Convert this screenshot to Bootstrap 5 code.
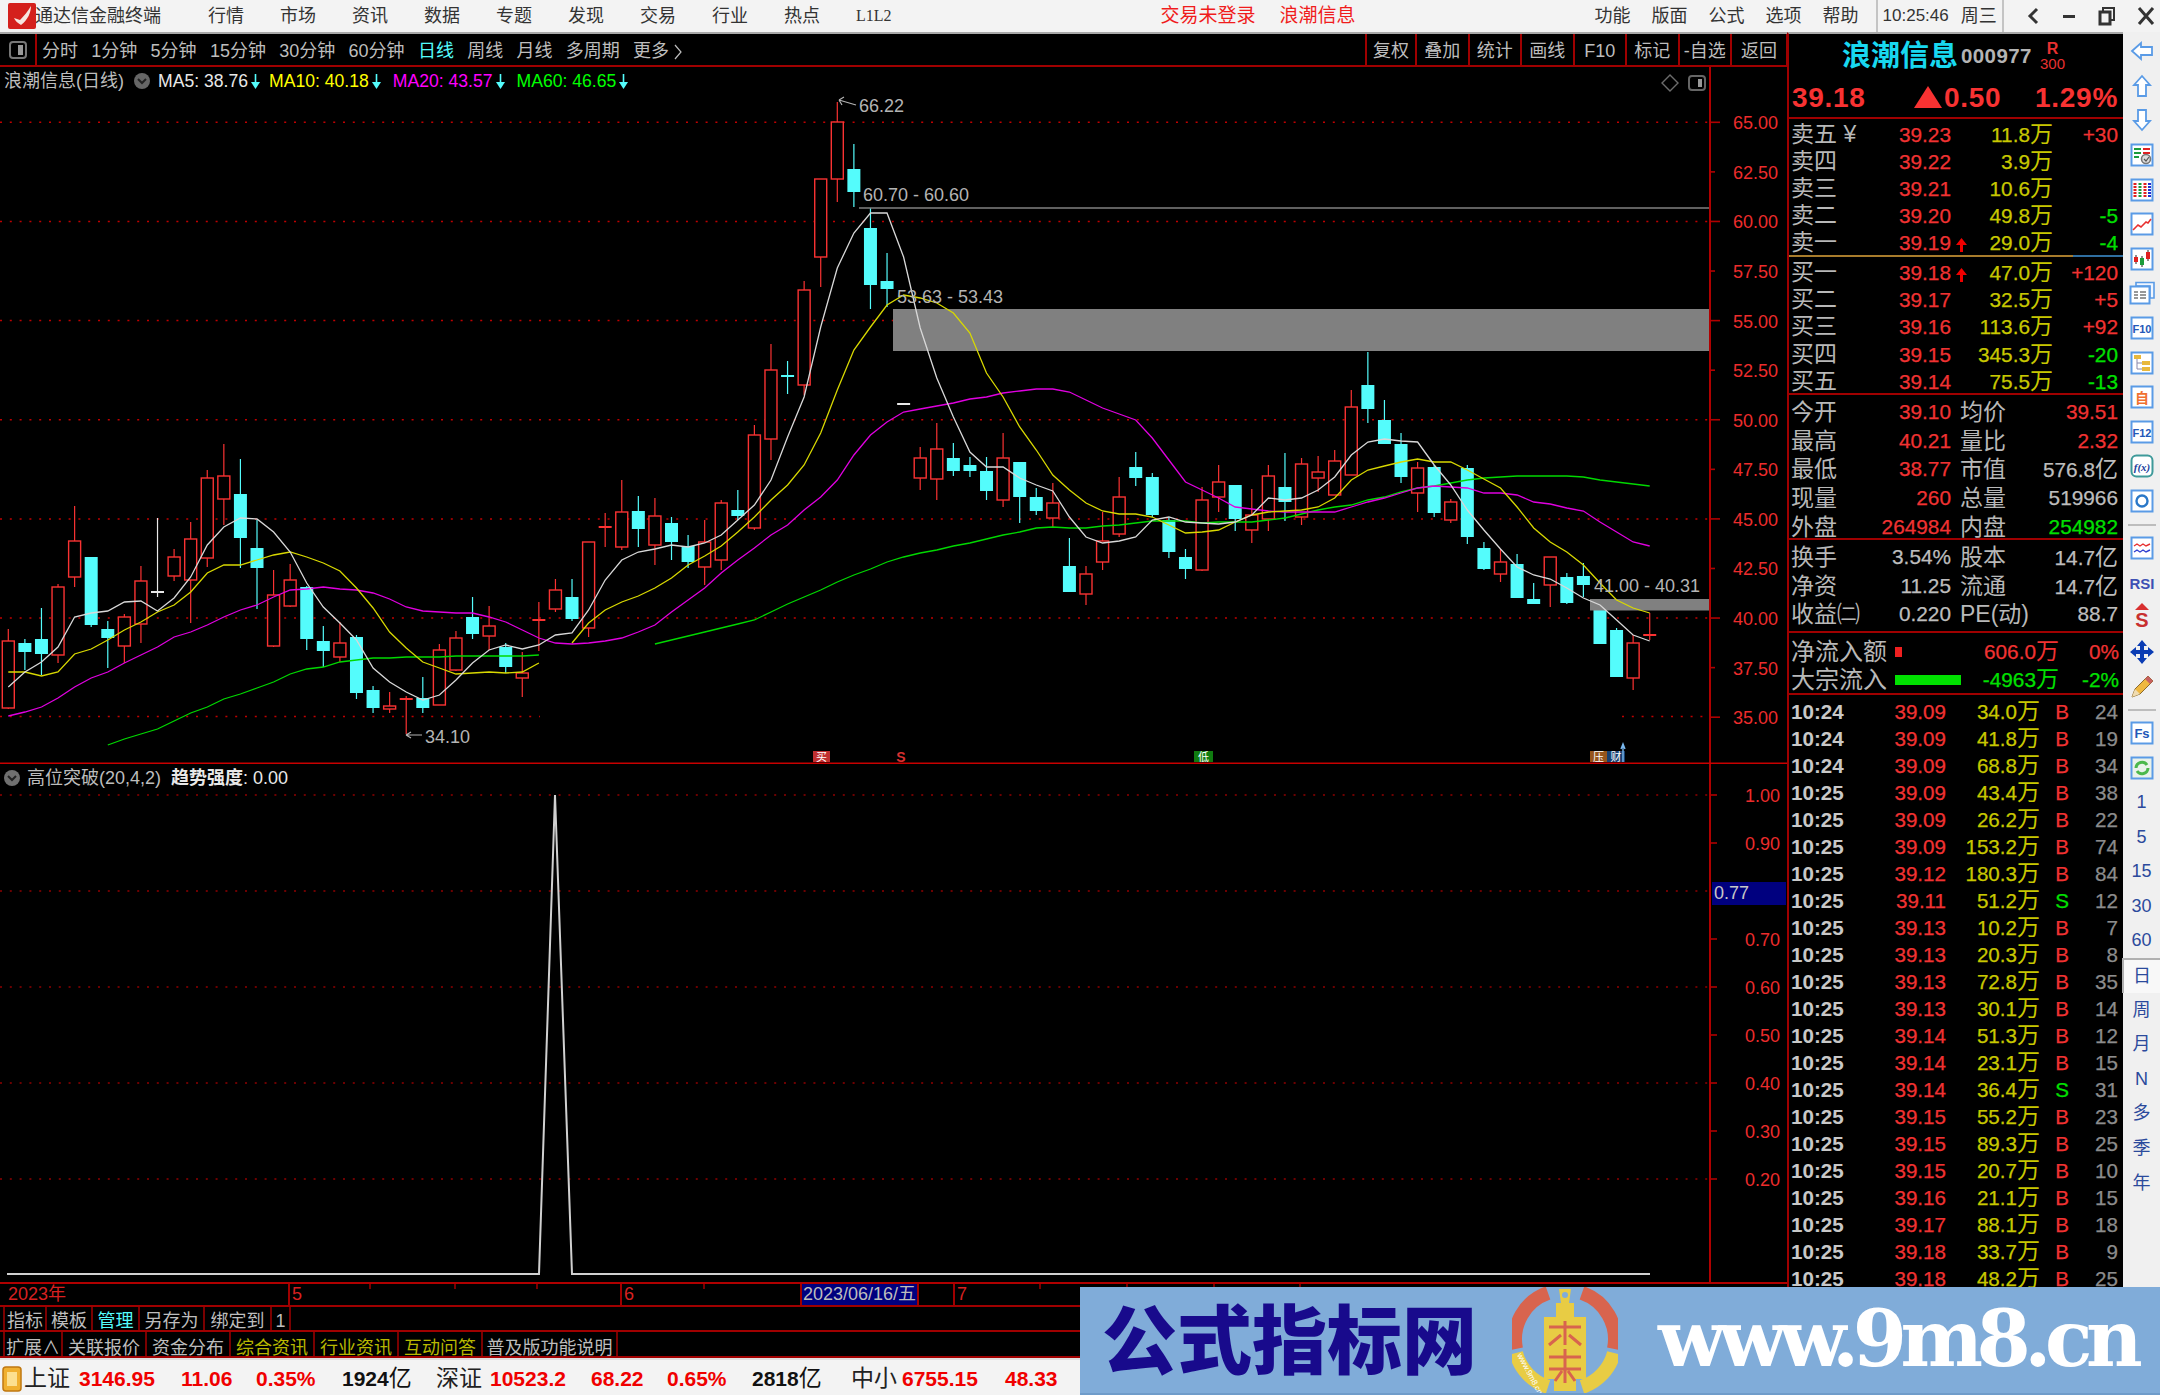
<!DOCTYPE html>
<html lang="zh-CN">
<head>
    <meta charset="UTF-8">
    <meta name="viewport" content="width=device-width, initial-scale=1.0">
    <title>通达信金融终端</title>
    <link href="https://cdn.jsdelivr.net/npm/bootstrap@5.3.0/dist/css/bootstrap.min.css" rel="stylesheet">
    <style>
        html, body { margin: 0; background: #000; }
        body { font-family: "Liberation Sans", "Noto Sans CJK SC", sans-serif; color: #bdbdbd; }
        .shell { width: 2160px; height: 1395px; overflow: hidden; background: #000; }

        /* title bar */
        .title-bar { height: 34px; background: #f3f3f3; border-bottom: 2px solid #a8a8a8; color: #333; font-size: 18px; line-height: 34px; white-space: nowrap; flex: none; }
        .app-logo { margin-left: 8px; width: 28px; height: 26px; flex: none; }
        .app-name { width: 126px; margin-left: -1px; }
        .menu-main { margin-left: 47px; gap: 36px; }
        .menu-tail { font-family: "Liberation Serif", serif; font-size: 16px; margin-left: 0; }
        .alert-text { margin-left: 269px; color: #f01c1c; font-size: 19px; gap: 24px; }
        .menu-side { margin-left: 239px; gap: 21px; }
        .clock { margin-left: 17px; border-left: 2px solid #c4c4c4; border-right: 2px solid #c4c4c4; padding: 0 5px; gap: 9px; font-size: 17px; }
        .clock span:last-child { font-size: 18px; margin-left: 3px; }
        .win-btns { margin-left: 22px; gap: 21px; }

        /* left side */
        .work-row { height: 1325px; }
        .left-col { width: 1787px; flex: none; }
        .tool-row { height: 33px; border-bottom: 2px solid #a00000; font-size: 18px; line-height: 35px; flex: none; white-space: nowrap; }
        .tool-first { width: 37px; border-right: 2px solid #a00000; flex: none; }
        .period-list { padding-left: 5px; gap: 13.3px; }
        .period-on { color: #54fcfc; }
        .tool-btn { border-left: 2px solid #a00000; text-align: center; }
        .tool-btns { margin-left: auto; height: 31px; border-right: 2px solid #a00000; margin-right: -1px; }
        .w52 { width: 52.5px; }
        .w50 { width: 50px; }
        .w56 { width: 56px; }

        .chart-main { height: 697px; flex: none; }
        .chart-sub { height: 518px; flex: none; }
        .chart-main svg, .chart-sub svg { display: block; }
        .legend-row { left: 4px; top: 2px; font-size: 17.6px; line-height: 24px; white-space: nowrap; }
        .legend-name { width: 129px; font-size: 18px; color: #bdbdbd; }
        .legend-ma { margin-left: 12px; }
        .ma-w { color: #e8e8e8; margin-left: 7px; }
        .ma-y { color: #ffff00; margin-left: 9px; }
        .ma-p { color: #ff00ff; }
        .ma-g { color: #00ff00; }
        .legend-arrow { width: 9px; height: 17px; margin-left: 3px; }
        .sub-legend { left: 3px; top: 2px; font-size: 18px; line-height: 24px; white-space: nowrap; gap: 6px; }
        .sub-legend b { color: #e8e8e8; font-weight: 400; margin-left: 4px; }
        .sub-legend b em { font-style: normal; font-weight: 700; }
        .corner-tools { top: 7px; right: 81px; gap: 9px; }

        .time-axis { height: 25px; border-top: 2px solid #b00000; border-bottom: 2px solid #a00000; font-size: 18px; line-height: 21px; display: grid; grid-template-columns: 288px 332px 180px 117px 36px 1fr; flex: none; }
        .time-axis > div { border-left: 2px solid #a00000; padding-left: 2px; color: #d82020; white-space: nowrap; }
        .time-axis > div:first-child { border-left: 0; padding-left: 8px; }
        .time-axis .date-cell { background: #00007f; color: #bdbdbd; padding-left: 1px; }
        .tab-row { height: 25px; border-bottom: 2px solid #a00000; padding-left: 3px; font-size: 18px; line-height: 29px; white-space: nowrap; flex: none; }
        .tab-row-low { height: 26px; line-height: 32px; }
        .tab-cell { border-left: 2px solid #7a0000; text-align: center; }
        .tab-cell:last-child { border-right: 2px solid #7a0000; }
        .tab-on { color: #54fcfc; }
        .tab-gold { color: #b8b800; }
        .t42 { width: 42px; } .t46 { width: 46px; } .t47 { width: 47px; } .t65 { width: 65px; } .t67 { width: 67px; } .t21 { width: 21px; }
        .t58 { width: 58px; } .t84 { width: 84px; } .t137 { width: 137px; }

        /* quote panel */
        .quote-panel { width: 336px; flex: none; border-left: 2px solid #a00000; border-top: 2px solid #a8a8a8; margin-top: -2px; white-space: nowrap; }
        .q-head { height: 85px; border-bottom: 2px solid #a00000; flex: none; }
        .q-title { height: 44px; padding-left: 53px; align-items: center; }
        .q-name { color: #18d8f0; font-size: 29px; font-weight: 700; line-height: 40px; width: 119px; }
        .q-code { color: #b4b4b4; font-size: 20.5px; font-weight: 700; letter-spacing: .4px; width: 79px; }
        .q-tags { color: #e83030; line-height: 15px; font-size: 15px; text-align: center; }
        .q-tags b { display: block; font-size: 16px; }
        .q-price { color: #f83232; font-size: 28px; font-weight: 700; letter-spacing: .7px; line-height: 40px; display: grid; grid-template-columns: 121px 118px 1fr; padding-left: 3px; }
        .q-price span:last-child { text-align: right; padding-right: 5px; }
        .q-tri { width: 30px; height: 24px; margin-right: 1px; vertical-align: -2px; }
        .book-row { height: 27.2px; line-height: 27px; display: grid; grid-template-columns: 90px 70px 20px 82px 65px; padding-left: 2px; font-size: 20.8px; -webkit-text-stroke: .25px; }
        .lbl { color: #b8b8b8; font-size: 23px; -webkit-text-stroke: 0; }
        .num-r { text-align: right; }
        .c-red { color: #f03232; }
        .c-yel { color: #c8c800; }
        .c-grn { color: #00e000; }
        .c-gry { color: #bdbdbd; }
        .wan { font-size: 23px; -webkit-text-stroke: 0; }
        .book-split { height: 2px; background: linear-gradient(90deg, #a87c2c 85%, #2f6ea0 85%); flex: none; }
        .book-sell { height: 136px; padding-top: 1.5px; flex: none; }
        .book-buy { flex: none; border-bottom: 2px solid #a00000; height: 138px; padding-top: 2px; }
        .stat-block { border-bottom: 2px solid #a00000; flex: none; padding-top: 3px; }
        .stat-row { line-height: 28px; display: grid; grid-template-columns: 88px 72px 79px 88px; padding-left: 2px; font-size: 20.8px; -webkit-text-stroke: .25px; }
        .stat-row .lbl2 { padding-left: 9px; }
        .h287 { height: 28.7px; }
        .h285 { height: 28.5px; }
        .stat-a { height: 145px; }
        .stat-b { height: 93px; }
        .flow-block { height: 62px; padding-top: 4px; border-bottom: 2px solid #a00000; flex: none; }
        .flow-row { height: 28px; line-height: 28px; display: grid; grid-template-columns: 104px 66px 98px 60px; padding-left: 2px; font-size: 20.8px; align-items: center; -webkit-text-stroke: .25px; }
        .flow-row .lbl { font-size: 24px; }
        .flow-bar { height: 10px; display: block; }
        .flow-bar-in { width: 7px; background: #f02020; }
        .flow-bar-out { width: 66px; background: #00e000; }
        .tick-list { padding-top: 3px; }
        .tick-row { height: 27px; line-height: 27px; display: grid; grid-template-columns: 78px 77px 94px 36px 42px; padding-left: 2px; font-size: 20.6px; -webkit-text-stroke: .25px; }
        .tick-time { color: #c8c8c8; font-weight: 700; -webkit-text-stroke: 0; }
        .tick-n { color: #8c8c8c; text-align: right; }

        /* right tool strip */
        .side-strip { width: 37px; flex: none; background: #f0f0f0; margin-top: -2px; padding-top: 2px; color: #2b4a9c; font-size: 18px; }
        .side-item { height: 34.6px; flex: none; }
        .side-gap { height: 12.4px; flex: none; }
        .side-gap i { width: 28px; height: 2px; background: #bdbdbd; display: block; }
        .side-on { background: #f8f8f8; border-left: 2px solid #b0b0b0; border-top: 2px solid #b0b0b0; margin-left: -1px; }

        /* status bar */
        .status-bar { height: 37px; background: #f3f3f3; border-top: 2px solid #e0e0e0; padding-left: 2px; display: grid; grid-template-columns: 22px 55px 102px 75px 86px 94px 54px 101px 76px 85px 99px 51px 103px 1fr; font-size: 21px; font-weight: 700; line-height: 37px; color: #f00000; white-space: nowrap; flex: none; }
        .st-name { color: #222; font-size: 23px; font-weight: 400; }
        .st-amt { color: #111; }
        .st-amt em { font-style: normal; font-weight: 400; font-size: 23px; }

        /* watermark banner */
        .wm-banner { left: 1080px; top: 1287px; width: 1080px; height: 108px; background: #80acd9; border-bottom: 2px solid #6f9cca; white-space: nowrap; overflow: hidden; }
        .wm-cn { color: #180a8c; font-size: 75px; font-weight: 900; line-height: 88px; width: 375px; margin-left: 22px; margin-top: 11px; flex: none; }
        .wm-logo { width: 106px; height: 106px; margin-left: 35px; flex: none; }
        .wm-url { color: #fff; font-family: "DejaVu Serif", serif; font-weight: 700; font-size: 78px; letter-spacing: -6.5px; line-height: 90px; margin-left: 40px; margin-top: 7px; flex: none; }
    </style>
</head>
<body>
<div class="shell position-relative d-flex flex-column">

    <div class="title-bar d-flex align-items-center">
        <svg class="app-logo" viewBox="0 0 28 26">
            <rect width="28" height="26" rx="2" fill="#d4201c"/>
            <path d="M6 15 L12 17 C16 13 20 8 23 3 C23 9 20 17 13 22 C10 20 7 18 6 15Z" fill="#f6e6e0"/>
        </svg>
        <span class="app-name">通达信金融终端</span>
        <div class="menu-main d-flex">
            <span>行情</span><span>市场</span><span>资讯</span><span>数据</span><span>专题</span><span>发现</span><span>交易</span><span>行业</span><span>热点</span><span class="menu-tail">L1L2</span>
        </div>
        <div class="alert-text d-flex"><span>交易未登录</span><span>浪潮信息</span></div>
        <div class="menu-side d-flex"><span>功能</span><span>版面</span><span>公式</span><span>选项</span><span>帮助</span></div>
        <div class="clock d-flex"><span>10:25:46</span><span>周三</span></div>
        <div class="win-btns d-flex align-items-center">
            <svg width="14" height="20" viewBox="0 0 14 20"><path d="M11 3 L4 10 L11 17" fill="none" stroke="#333" stroke-width="3"/></svg>
            <svg width="16" height="20" viewBox="0 0 16 20"><rect x="2" y="9" width="12" height="3" fill="#333"/></svg>
            <svg width="18" height="20" viewBox="0 0 18 20"><rect x="5" y="2" width="11" height="12" fill="none" stroke="#333" stroke-width="2"/><rect x="2" y="6" width="10" height="12" fill="#f3f3f3" stroke="#333" stroke-width="3"/></svg>
            <svg width="18" height="20" viewBox="0 0 18 20"><path d="M2 2 L16 18 M16 2 L2 18" stroke="#333" stroke-width="3"/></svg>
        </div>
    </div>

    <div class="work-row d-flex">
        <div class="left-col d-flex flex-column">
            <div class="tool-row d-flex">
                <div class="tool-first d-flex align-items-center justify-content-center">
                    <svg width="18" height="18" viewBox="0 0 18 18"><rect x="1" y="1" width="16" height="16" rx="3" fill="none" stroke="#777" stroke-width="2"/><rect x="9" y="4" width="5" height="10" fill="#999"/></svg>
                </div>
                <div class="period-list d-flex">
                    <span>分时</span><span>1分钟</span><span>5分钟</span><span>15分钟</span><span>30分钟</span><span>60分钟</span><span class="period-on">日线</span><span>周线</span><span>月线</span><span>多周期</span>
                    <span>更多 <svg width="8" height="16" viewBox="0 0 8 16"><path d="M1 1 L7 8 L1 15" fill="none" stroke="#bdbdbd" stroke-width="1.200"/></svg></span>
                </div>
                <div class="tool-btns d-flex">
                    <span class="tool-btn w50">复权</span><span class="tool-btn w52">叠加</span><span class="tool-btn w52">统计</span><span class="tool-btn w52">画线</span><span class="tool-btn w52">F10</span><span class="tool-btn w52">标记</span><span class="tool-btn w52">-自选</span><span class="tool-btn w56">返回</span>
                </div>
            </div>

            <div class="chart-main position-relative">
                <svg id="mainChart" width="1787" height="697" viewBox="0 67 1787 697"></svg>
                <div class="legend-row position-absolute d-flex align-items-center">
                    <span class="legend-name">浪潮信息(日线)</span>
                    <svg width="18" height="18" viewBox="0 0 18 18"><circle cx="9" cy="9" r="8" fill="#666"/><path d="M5 7 L9 11 L13 7" fill="none" stroke="#222" stroke-width="2"/></svg>
                    <span class="ma-w">MA5: 38.76</span><svg class="legend-arrow" viewBox="0 0 9 17"><path d="M4.5 1V10" stroke="#54fcfc" stroke-width="1.6"/><path d="M0 9H9L4.5 16Z" fill="#54fcfc"/></svg>
                    <span class="ma-y">MA10: 40.18</span><svg class="legend-arrow" viewBox="0 0 9 17"><path d="M4.5 1V10" stroke="#54fcfc" stroke-width="1.6"/><path d="M0 9H9L4.5 16Z" fill="#54fcfc"/></svg>
                    <span class="legend-ma ma-p">MA20: 43.57</span><svg class="legend-arrow" viewBox="0 0 9 17"><path d="M4.5 1V10" stroke="#54fcfc" stroke-width="1.6"/><path d="M0 9H9L4.5 16Z" fill="#54fcfc"/></svg>
                    <span class="legend-ma ma-g">MA60: 46.65</span><svg class="legend-arrow" viewBox="0 0 9 17"><path d="M4.5 1V10" stroke="#54fcfc" stroke-width="1.6"/><path d="M0 9H9L4.5 16Z" fill="#54fcfc"/></svg>
                </div>
                <div class="corner-tools position-absolute d-flex align-items-center">
                    <svg width="18" height="18" viewBox="0 0 18 18"><path d="M9 1 L17 9 L9 17 L1 9Z" fill="none" stroke="#6c6c6c" stroke-width="1.4"/></svg>
                    <svg width="18" height="16" viewBox="0 0 18 16"><rect x="1" y="1" width="16" height="14" rx="3" fill="none" stroke="#666" stroke-width="2"/><rect x="10" y="4" width="4" height="8" fill="#999"/></svg>
                </div>
            </div>

            <div class="chart-sub position-relative">
                <svg id="subChart" width="1787" height="518" viewBox="0 764 1787 518"></svg>
                <div class="sub-legend position-absolute d-flex align-items-center">
                    <svg width="18" height="18" viewBox="0 0 18 18"><circle cx="9" cy="9" r="8" fill="#707070"/><path d="M5 7 L9 11 L13 7" fill="none" stroke="#222" stroke-width="2"/></svg>
                    <span>高位突破(20,4,2)</span><b><em>趋势强度</em>: 0.00</b>
                </div>
            </div>

            <div class="time-axis position-relative">
                <div>2023年</div><div>5</div><div>6</div><div class="date-cell">2023/06/16/五</div><div></div><div>7</div>
            </div>
            <div class="tab-row d-flex">
                <span class="tab-cell t42">指标</span><span class="tab-cell t46">模板</span><span class="tab-cell t47 tab-on">管理</span><span class="tab-cell t65">另存为</span><span class="tab-cell t67">绑定到</span><span class="tab-cell t21">1</span>
            </div>
            <div class="tab-row tab-row-low d-flex">
                <span class="tab-cell t58">扩展∧</span><span class="tab-cell t84">关联报价</span><span class="tab-cell t84">资金分布</span><span class="tab-cell t84 tab-gold">综合资讯</span><span class="tab-cell t84 tab-gold">行业资讯</span><span class="tab-cell t84 tab-gold">互动问答</span><span class="tab-cell t137">普及版功能说明</span>
            </div>
        </div>

        <div class="quote-panel d-flex flex-column">
            <div class="q-head">
                <div class="q-title d-flex">
                    <span class="q-name">浪潮信息</span><span class="q-code">000977</span>
                    <span class="q-tags"><b>R</b>300</span>
                </div>
                <div class="q-price"><span>39.18</span><span><svg class="q-tri" viewBox="0 0 30 24"><path d="M15 1 L29 23 H1Z" fill="#f83232"/></svg>0.50</span><span>1.29%</span></div>
            </div>
            <div class="book-sell" id="bookSell"></div>
            <div class="book-split"></div>
            <div class="book-buy" id="bookBuy"></div>

            <div class="stat-block stat-a" id="statA"></div>
            <div class="stat-block stat-b" id="statB"></div>

            <div class="flow-block">
                <div class="flow-row">
                    <span class="lbl">净流入额</span>
                    <span><i class="flow-bar flow-bar-in"></i></span>
                    <span class="num-r c-red">606.0<span class="wan">万</span></span>
                    <span class="num-r c-red">0%</span>
                </div>
                <div class="flow-row">
                    <span class="lbl">大宗流入</span>
                    <span><i class="flow-bar flow-bar-out"></i></span>
                    <span class="num-r c-grn">-4963<span class="wan">万</span></span>
                    <span class="num-r c-grn">-2%</span>
                </div>
            </div>
            <div class="tick-list" id="tickList"></div>
        </div>

        <div class="side-strip d-flex flex-column">
            <div class="side-item d-flex align-items-center justify-content-center"><svg width="24" height="20" viewBox="0 0 24 20"><path d="M2 10 L11 2 V6 H22 V14 H11 V18Z" fill="#fff" stroke="#5a9be6" stroke-width="1.8"/></svg></div>
            <div class="side-item d-flex align-items-center justify-content-center"><svg width="20" height="24" viewBox="0 0 20 24"><path d="M10 2 L18 11 H14 V22 H6 V11 H2Z" fill="#fff" stroke="#5a9be6" stroke-width="1.8"/></svg></div>
            <div class="side-item d-flex align-items-center justify-content-center"><svg width="20" height="24" viewBox="0 0 20 24"><path d="M10 22 L18 13 H14 V2 H6 V13 H2Z" fill="#fff" stroke="#5a9be6" stroke-width="1.8"/></svg></div>
            <div class="side-item d-flex align-items-center justify-content-center"><svg width="24" height="24" viewBox="0 0 24 24"><rect x="1.5" y="1.5" width="21" height="21" fill="#fff" stroke="#5a9be6" stroke-width="2"/><path d="M4 6H11M4 10H11M4 14H9" stroke="#1c9c3c" stroke-width="2"/><path d="M13 6H20M13 10H20" stroke="#e02020" stroke-width="2"/><circle cx="16" cy="16" r="4.5" fill="#ddd" stroke="#777" stroke-width="1.6"/><path d="M14 16 L16 18 L19 14" fill="none" stroke="#555" stroke-width="1.2"/></svg></div>
            <div class="side-item d-flex align-items-center justify-content-center"><svg width="24" height="24" viewBox="0 0 24 24"><rect x="1.5" y="1.5" width="21" height="21" fill="#fff" stroke="#5a9be6" stroke-width="2"/><path d="M5 5V19" stroke="#e02020" stroke-width="3" stroke-dasharray="2 1"/><path d="M10 5V19" stroke="#1c9c3c" stroke-width="3" stroke-dasharray="2 1"/><path d="M15 5V19" stroke="#e02020" stroke-width="3" stroke-dasharray="2 1"/><path d="M19.500 5V19" stroke="#2030d0" stroke-width="3" stroke-dasharray="2 1"/></svg></div>
            <div class="side-item d-flex align-items-center justify-content-center"><svg width="24" height="24" viewBox="0 0 24 24"><rect x="1.5" y="1.500" width="21" height="21" fill="#fff" stroke="#5a9be6" stroke-width="2"/><path d="M3 18 L8 13 L11 15 L16 10 L18 11 L21 7" fill="none" stroke="#e83030" stroke-width="1.600"/></svg></div>
            <div class="side-item d-flex align-items-center justify-content-center"><svg width="24" height="24" viewBox="0 0 24 24"><rect x="1.5" y="1.5" width="21" height="21" fill="#fff" stroke="#5a9be6" stroke-width="2"/><path d="M6 8V17M12 9V20M18 3V14" stroke="#222" stroke-width="1"/><rect x="4" y="10" width="4" height="5" fill="#e02020"/><rect x="10" y="11" width="4" height="7" fill="#1c9c3c"/><rect x="16" y="5" width="4" height="7" fill="#e02020"/></svg></div>
            <div class="side-item d-flex align-items-center justify-content-center"><svg width="26" height="24" viewBox="0 0 26 24"><path d="M7 1.500H25V17H21V5H7Z" fill="#f0f6ff" stroke="#5a9be6" stroke-width="1.600"/><rect x="1.500" y="5.500" width="19" height="17" fill="#fff" stroke="#5a9be6" stroke-width="2"/><path d="M5 11H9M11 11H17M5 14H9M11 14H17M5 17H9M11 17H17" stroke="#777" stroke-width="1.600"/></svg></div>
            <div class="side-item d-flex align-items-center justify-content-center"><svg width="24" height="24" viewBox="0 0 24 24"><rect x="1.5" y="1.5" width="21" height="21" fill="#fff" stroke="#5a9be6" stroke-width="2"/><text x="12" y="16.500" text-anchor="middle" font-size="11" fill="#2358b8" font-family="Liberation Sans" font-weight="700">F10</text></svg></div>
            <div class="side-item d-flex align-items-center justify-content-center"><svg width="24" height="24" viewBox="0 0 24 24"><rect x="1.5" y="1.5" width="21" height="21" fill="#fff" stroke="#5a9be6" stroke-width="2"/><rect x="4" y="4" width="7" height="4" fill="#e8b83c"/><rect x="12" y="10" width="8" height="4" fill="#e8b83c"/><rect x="12" y="16" width="8" height="4" fill="#e8b83c"/><path d="M7 8V18H12M7 12H12" fill="none" stroke="#88a" stroke-width="1"/></svg></div>
            <div class="side-item d-flex align-items-center justify-content-center"><svg width="24" height="24" viewBox="0 0 24 24"><rect x="1.5" y="1.5" width="21" height="21" fill="#fff" stroke="#5a9be6" stroke-width="2"/><text x="12" y="18" text-anchor="middle" font-size="14" font-weight="700" fill="#f07030" font-family="Noto Sans CJK SC">自</text></svg></div>
            <div class="side-item d-flex align-items-center justify-content-center"><svg width="24" height="24" viewBox="0 0 24 24"><rect x="1.5" y="1.5" width="21" height="21" fill="#fff" stroke="#5a9be6" stroke-width="2"/><text x="12" y="16.500" text-anchor="middle" font-size="11" fill="#2358b8" font-family="Liberation Sans" font-weight="700">F12</text></svg></div>
            <div class="side-item d-flex align-items-center justify-content-center"><svg width="24" height="24" viewBox="0 0 24 24"><rect x="1.5" y="1.500" width="21" height="21" rx="5" fill="#fff" stroke="#3e9a9a" stroke-width="2"/><text x="12" y="16.500" text-anchor="middle" font-size="11" font-style="italic" fill="#20409c" font-family="Liberation Serif" font-weight="700">f(x)</text></svg></div>
            <div class="side-item d-flex align-items-center justify-content-center"><svg width="24" height="24" viewBox="0 0 24 24"><rect x="1.5" y="1.5" width="21" height="21" fill="#fff" stroke="#5a9be6" stroke-width="2"/><circle cx="12" cy="12" r="5.500" fill="none" stroke="#2a78c8" stroke-width="2.400"/></svg></div>
            <div class="side-gap d-flex align-items-center justify-content-center"><i></i></div>
            <div class="side-item d-flex align-items-center justify-content-center"><svg width="24" height="24" viewBox="0 0 24 24"><rect x="1.5" y="1.5" width="21" height="21" fill="#fff" stroke="#5a9be6" stroke-width="2"/><path d="M4 10 L7 8 L10 10 L13 8 L16 10 L20 8" fill="none" stroke="#e83030" stroke-width="1.400"/><path d="M4 16 L7 14 L10 16 L13 14 L16 16 L20 14" fill="none" stroke="#3040d0" stroke-width="1.400"/></svg></div>
            <div class="side-item d-flex align-items-center justify-content-center"><svg width="32" height="20" viewBox="0 0 32 20"><text x="16" y="16" text-anchor="middle" font-size="15" font-weight="700" fill="#3e50b4" font-family="Liberation Sans">RSI</text></svg></div>
            <div class="side-item d-flex align-items-center justify-content-center"><svg width="26" height="30" viewBox="0 0 26 30"><path d="M13 1 L20 8 H6Z" fill="#d83030"/><text x="13" y="25" text-anchor="middle" font-size="20" font-weight="700" fill="#c83030" font-family="Liberation Sans">S</text></svg></div>
            <div class="side-item d-flex align-items-center justify-content-center"><svg width="26" height="26" viewBox="0 0 26 26"><path d="M13 1 L18 7 H15 V11 H19 V8 L25 13 L19 18 V15 H15 V19 H18 L13 25 L8 19 H11 V15 H7 V18 L1 13 L7 8 V11 H11 V7 H8Z" fill="#0a3cb4"/></svg></div>
            <div class="side-item d-flex align-items-center justify-content-center"><svg width="26" height="26" viewBox="0 0 26 26"><path d="M3 24 L6 16 L19 3 L24 8 L11 21Z" fill="#f0b840" stroke="#8a6a30" stroke-width="1"/><path d="M19 3 L24 8 L21 11 L16 6Z" fill="#c86060"/><path d="M3 24 L6 16 L11 21Z" fill="#f0dcb0"/></svg></div>
            <div class="side-gap d-flex align-items-center justify-content-center"><i></i></div>
            <div class="side-item d-flex align-items-center justify-content-center"><svg width="24" height="24" viewBox="0 0 24 24"><rect x="1.5" y="1.5" width="21" height="21" fill="#fff" stroke="#5a9be6" stroke-width="2"/><text x="12" y="17" text-anchor="middle" font-size="13" fill="#2358b8" font-family="Liberation Sans" font-weight="700">Fs</text></svg></div>
            <div class="side-item d-flex align-items-center justify-content-center"><svg width="24" height="24" viewBox="0 0 24 24"><rect x="1.5" y="1.5" width="21" height="21" fill="#eaf2ea" stroke="#5a9be6" stroke-width="2"/><path d="M6 12 A6 6 0 0 1 17 9 M18 12 A6 6 0 0 1 7 15" fill="none" stroke="#4cb84c" stroke-width="3"/></svg></div>
            <div class="side-item d-flex align-items-center justify-content-center">1</div>
            <div class="side-item d-flex align-items-center justify-content-center">5</div>
            <div class="side-item d-flex align-items-center justify-content-center">15</div>
            <div class="side-item d-flex align-items-center justify-content-center">30</div>
            <div class="side-item d-flex align-items-center justify-content-center">60</div>
            <div class="side-item side-on d-flex align-items-center justify-content-center">日</div>
            <div class="side-item d-flex align-items-center justify-content-center">周</div>
            <div class="side-item d-flex align-items-center justify-content-center">月</div>
            <div class="side-item d-flex align-items-center justify-content-center">N</div>
            <div class="side-item d-flex align-items-center justify-content-center">多</div>
            <div class="side-item d-flex align-items-center justify-content-center">季</div>
            <div class="side-item d-flex align-items-center justify-content-center">年</div>
        </div>
    </div>

    <div class="status-bar">
        <span class="d-flex align-items-center"><svg width="20" height="26" viewBox="0 0 20 26"><rect x="1" y="1" width="18" height="24" rx="3" fill="#f0b030" stroke="#c07810" stroke-width="1.500"/><rect x="5" y="6" width="10" height="14" fill="#fce090"/></svg></span>
        <span class="st-name">上证</span><span>3146.95</span><span>11.06</span><span>0.35%</span><span class="st-amt">1924<em>亿</em></span>
        <span class="st-name">深证</span><span>10523.2</span><span>68.22</span><span>0.65%</span><span class="st-amt">2818<em>亿</em></span>
        <span class="st-name">中小</span><span>6755.15</span><span>48.33</span>
    </div>

    <!-- 水印横幅盖在界面上面 -->
    <div class="wm-banner position-absolute d-flex">
        <div class="wm-cn">公式指标网</div>
        <svg class="wm-logo" viewBox="0 0 106 106">
            <path d="M36 6 A49 49 0 0 0 4 62" fill="none" stroke="#d8644e" stroke-width="14"/>
            <path d="M70 6 A49 49 0 0 1 102 62" fill="none" stroke="#d8644e" stroke-width="14"/>
            <path d="M102 66 A49 49 0 0 1 70 100" fill="none" stroke="#e8cc44" stroke-width="14"/>
            <path d="M4 66 A49 49 0 0 0 36 100" fill="none" stroke="#e8cc44" stroke-width="14"/>
            <path d="M47 2 H59 L57 16 H62 V30 H74 V92 H64 V104 H42 V92 H32 V30 H44 V16 H49Z" fill="#e8cc44"/>
            <circle cx="53" cy="8" r="3" fill="#80acd9"/>
            <path d="M37 40 H69 M53 34 V58 M37 58 L49 48 M69 58 L57 48 M37 70 H69 M37 82 H69 M53 62 V96 M43 94 L50 84 M63 94 L56 84" fill="none" stroke="#d8644e" stroke-width="3"/>
            <text font-size="8" fill="#fff" font-family="Liberation Sans" transform="translate(5 68) rotate(62)">www.9m8.cn</text>
        </svg>
        <div class="wm-url">www.9m8.cn</div>
    </div>
</div>

<script>
    // K线数据: 实体上沿, 实体下沿, 最高, 最低 (都是屏幕坐标)
    const candles = [
        [641,708,629,709,'r'],[643,652,639,670,'c'],[639,654,608,675,'c'],[587,655,584,663,'r'],[541,577,506,587,'r'],
        [557,625,557,627,'c'],[629,638,621,668,'c'],[617,646,614,663,'r'],[581,624,566,643,'r'],[592,592,518,597,'w'],
        [557,576,549,581,'r'],[539,580,522,623,'r'],[478,558,470,567,'r'],[476,499,444,525,'r'],[494,538,459,568,'c'],
        [548,568,520,609,'c'],[595,646,570,647,'r'],[580,606,564,607,'r'],[587,639,586,650,'c'],[641,651,626,667,'c'],
        [643,657,622,662,'r'],[637,693,635,699,'c'],[690,708,686,713,'c'],[706,709,692,713,'r'],[699,699,696,734,'r'],
        [698,708,677,713,'c'],[650,705,644,705,'r'],[638,670,631,671,'r'],[617,634,597,639,'c'],[626,636,606,650,'r'],
        [647,667,643,673,'c'],[673,678,652,697,'r'],[620,620,602,651,'r'],[590,609,579,612,'r'],[597,619,579,621,'c'],
        [542,628,542,637,'r'],[527,527,513,547,'r'],[512,547,480,550,'r'],[511,529,496,547,'c'],[516,545,498,565,'r'],
        [523,542,517,560,'c'],[546,562,535,568,'c'],[542,567,520,585,'r'],[503,560,500,570,'r'],[510,516,490,520,'c'],
        [435,528,425,530,'r'],[370,439,344,460,'r'],[376,376,361,394,'c'],[290,385,281,395,'r'],[179,257,179,287,'r'],
        [122,179,102,202,'r'],[169,192,144,207,'c'],[228,285,208,309,'c'],[281,289,253,307,'c'],[404,404,404,404,'w'],
        [458,478,447,490,'r'],[449,479,423,500,'r'],[458,471,443,476,'c'],[465,471,457,477,'c'],[471,491,457,500,'c'],
        [458,500,433,507,'r'],[462,497,462,523,'c'],[497,511,488,515,'c'],[503,518,483,527,'r'],[566,592,538,592,'c'],
        [574,594,566,605,'r'],[541,562,512,570,'r'],[497,534,477,537,'r'],[467,478,452,486,'c'],[477,515,473,517,'c'],
        [520,552,517,558,'c'],[557,569,549,579,'c'],[500,570,487,571,'r'],[482,497,465,512,'r'],[485,519,485,531,'c'],
        [515,530,489,543,'r'],[476,519,465,531,'r'],[487,502,453,521,'c'],[464,517,458,525,'r'],[472,478,456,492,'r'],
        [461,495,450,495,'r'],[407,475,390,475,'r'],[385,409,352,423,'c'],[420,444,400,444,'c'],[444,477,433,483,'c'],
        [468,493,462,512,'r'],[467,513,465,517,'c'],[502,520,499,523,'r'],[468,537,465,544,'c'],[548,569,542,570,'c'],
        [562,574,549,582,'r'],[564,598,554,598,'c'],[599,604,583,604,'c'],[557,585,557,607,'r'],[577,603,573,604,'c'],
        [576,585,563,597,'c'],[600,644,600,644,'c'],[630,677,628,677,'c'],[643,678,635,690,'r'],[635,635,613,640,'r']
    ];
    const ma5 = [687,672,662,647,617,613,611,602,601,611,598,577,545,527,518,519,532,552,583,607,623,640,668,682,692,700,695,680,663,650,645,649,645,635,633,610,580,560,552,549,545,547,543,535,520,505,480,437,397,327,268,233,213,213,257,328,378,417,452,467,467,478,485,491,517,537,543,541,537,520,517,522,523,524,522,515,498,500,498,490,477,455,442,439,441,442,465,485,510,530,549,567,575,579,588,598,605,620,635,641];
    const ma10 = [672,672,676,672,654,649,640,630,622,612,605,592,573,565,565,560,555,552,557,563,571,588,608,632,648,662,668,674,673,672,673,672,663,null,643,623,610,602,596,588,578,565,556,546,532,517,500,485,465,433,390,350,327,305,295,298,303,313,333,373,397,427,450,475,490,503,511,514,514,517,525,533,532,530,522,515,512,511,510,507,498,480,470,466,462,459,462,462,470,479,488,507,528,542,552,565,583,600,608,613];
    const ma20 = [716,712,707,698,687,678,672,663,655,647,637,632,625,617,610,605,597,590,589,587,589,590,593,599,607,611,612,613,613,617,622,630,638,643,644,643,641,638,632,625,612,600,588,573,560,548,535,525,510,497,480,455,435,422,412,409,406,403,399,397,393,391,389,389,392,400,408,414,420,438,460,482,490,498,507,509,511,512,512,512,512,507,502,498,493,488,486,487,488,493,493,495,502,504,508,511,522,532,542,546];
    const ma60 = [null,null,null,null,null,null,745,739,734,729,721,713,707,699,694,688,682,674,669,667,662,660,658,658,657,657,657,656,656,656,656,656,655,null,null,null,null,null,null,644,640,636,632,628,624,620,612,604,597,590,582,575,569,562,557,553,550,546,543,539,535,532,528,527,528,528,526,525,523,521,521,521,523,522,522,522,520,518,514,510,507,505,500,497,492,488,486,483,480,478,477,476,476,476,476,477,480,482,484,486];

    const xi = i => 8.3 + 16.58 * i;
    const priceY = p => 122.3 + (65 - p) * 19.83;
    const RED = '#fa3232', CYAN = '#54fcfc', AXIS = '#b00000';

    function maLine(values, color) {
        let out = '', pts = [];
        const flush = () => {
            if (pts.length) out += `<polyline points="${pts.join(' ')}" fill="none" stroke="${color}" stroke-width="1.3"/>`;
            pts = [];
        };
        values.forEach((y, i) => { if (y === null) flush(); else pts.push(`${xi(i).toFixed(1)},${y}`); });
        flush();
        return out;
    }

    function drawCandle(c, i) {
        const x = xi(i), [top, bot, hi, lo, kind] = c;
        const color = kind === 'r' ? RED : kind === 'c' ? CYAN : '#e8e8e8';
        let s = `<line x1="${x}" x2="${x}" y1="${hi}" y2="${lo}" stroke="${color}" stroke-width="1.2"/>`;
        if (top === bot) {
            s += `<line x1="${x - 6.5}" x2="${x + 6.5}" y1="${top}" y2="${top}" stroke="${color}" stroke-width="2"/>`;
        } else if (kind === 'r') {
            s += `<rect x="${x - 6}" y="${top}" width="12" height="${bot - top}" fill="#000" stroke="${color}" stroke-width="1.4"/>`;
        } else {
            s += `<rect x="${x - 6.5}" y="${top}" width="13" height="${bot - top}" fill="${color}"/>`;
        }
        return s;
    }

    function label(x, y, text, anchor, color) {
        return `<text x="${x}" y="${y}" fill="${color || '#b4b4b4'}" font-size="18" font-family="Liberation Sans" text-anchor="${anchor || 'start'}">${text}</text>`;
    }

    // 主图
    let main = '';
    [65, 60, 55, 50, 45, 40].forEach(p => {
        const y = priceY(p).toFixed(1);
        main += `<line x1="0" x2="1710" y1="${y}" y2="${y}" stroke="#c00000" stroke-width="1.5" stroke-dasharray="2 7.8"/>`;
    });
    main += `<path d="M0 716.500H540M1622 716.500H1710" stroke="#c00000" stroke-width="1.5" stroke-dasharray="2 7.8"/>`;
    candles.forEach((c, i) => { main += drawCandle(c, i); });
    main += `<rect x="893" y="309" width="817" height="42" fill="#808080"/>`;
    main += `<rect x="1590" y="599" width="120" height="11.500" fill="#808080"/>`;
    main += `<line x1="859" x2="1710" y1="208" y2="208" stroke="#808080" stroke-width="1.600"/>`;
    main += maLine(ma60, '#00d800') + maLine(ma20, '#e000e0') + maLine(ma10, '#d8d800') + maLine(ma5, '#d8d8d8');
    main += label(859, 112, '66.22') + `<path d="M856 105 L839 100 M839 100 L844 97 M839 100 L842 105" fill="none" stroke="#b4b4b4" stroke-width="1.200"/>`;
    main += label(863, 201, '60.70 - 60.60') + label(897, 303, '53.63 - 53.43') + label(1594, 592, '41.00 - 40.31');
    main += label(425, 743, '34.10') + `<path d="M406 735 H422 M406 735 L411 732 M406 735 L411 738" fill="none" stroke="#b4b4b4" stroke-width="1.200"/>`;
    // 信号小块
    main += `<rect x="813" y="751" width="17" height="11" fill="#c03030"/><text x="821.500" y="761" text-anchor="middle" font-size="11" fill="#fff" font-family="Noto Sans CJK SC">买</text>`;
    main += `<text x="901" y="762" text-anchor="middle" font-size="14" font-weight="700" fill="#d83030" font-family="Liberation Sans">S</text>`;
    main += `<rect x="1194" y="751" width="19" height="11" fill="#107c10"/><text x="1203.500" y="761" text-anchor="middle" font-size="11" fill="#fff" font-family="Noto Sans CJK SC">低</text>`;
    main += `<rect x="1590" y="751" width="17" height="11" fill="#96551c"/><text x="1598.500" y="761" text-anchor="middle" font-size="11" fill="#fff" font-family="Noto Sans CJK SC">压</text>`;
    main += `<rect x="1607" y="751" width="18" height="11" fill="#184070"/><text x="1616" y="761" text-anchor="middle" font-size="11" fill="#fff" font-family="Noto Sans CJK SC">财</text>`;
    main += `<path d="M1623 762V746M1621 749L1623 744L1625 749" fill="none" stroke="#7ab8f0" stroke-width="1.400"/>`;
    // 坐标轴
    main += `<line x1="1710" x2="1710" y1="67" y2="764" stroke="${AXIS}" stroke-width="2"/>`;
    for (let p = 35; p <= 65; p += 2.5) {
        const y = priceY(p), major = p % 5 === 0;
        main += `<line x1="1710" x2="${major ? 1720 : 1715}" y1="${y}" y2="${y}" stroke="${AXIS}" stroke-width="1.600"/>`;
        main += label(1778, y + 7, p.toFixed(2), 'end', '#ec2c2c');
    }
    main += `<line x1="0" x2="1787" y1="763.500" y2="763.500" stroke="#c80000" stroke-width="2"/>`;
    document.getElementById('mainChart').innerHTML = main;

    // 副图
    let sub = '';
    [795, 891, 987, 1083, 1179].forEach(y => {
        sub += `<line x1="0" x2="1710" y1="${y}" y2="${y}" stroke="#900000" stroke-width="1.400" stroke-dasharray="2 7.800"/>`;
    });
    sub += `<polyline points="7,1274 539,1274 555,795 572,1274 1650,1274" fill="none" stroke="#d0d0d0" stroke-width="2"/>`;
    sub += `<line x1="1710" x2="1710" y1="764" y2="1282" stroke="${AXIS}" stroke-width="2"/>`;
    [1, .9, .7, .6, .5, .4, .3, .2].forEach(v => {
        const y = 1275 - v * 480;
        sub += `<line x1="1710" x2="1717" y1="${y}" y2="${y}" stroke="${AXIS}" stroke-width="1.600"/>`;
        sub += label(1780, y + 6.500, v.toFixed(2), 'end', '#ec2c2c');
    });
    sub += `<rect x="1712" y="882" width="74" height="23" fill="#00007f"/>` + label(1714, 899, '0.77', 'start', '#c8c8c8');
    document.getElementById('subChart').innerHTML = sub;

    // 时间轴小刻度
    const axisEl = document.querySelector('.time-axis');
    const ticks = [370, 455, 537, 704, 1040, 1127, 1214, 1300].map(x => `<line x1="${x}" x2="${x}" y1="0" y2="5" stroke="#a00000" stroke-width="1.500"/>`).join('');
    axisEl.insertAdjacentHTML('beforeend', `<svg class="position-absolute top-0 start-0" width="1787" height="6">${ticks}</svg>`);

    // 买卖盘
    const rowHtml = (name, price, mark, vol, delta) => {
        const deltaCls = delta.startsWith('-') ? 'c-grn' : 'c-red';
        const arrow = mark ? '<svg width="13" height="16" viewBox="0 0 13 16"><path d="M6.500 1 L12 8 H8 V15 H5 V8 H1Z" fill="#f00000"/></svg>' : '';
        return `<div class="book-row"><span class="lbl">${name}</span><span class="num-r c-red">${price}</span><span class="ps-1">${arrow}</span><span class="num-r c-yel">${vol}<span class="wan">万</span></span><span class="num-r ${deltaCls}">${delta}</span></div>`;
    };
    document.getElementById('bookSell').innerHTML = [
        ['卖五 ¥', '39.23', 0, '11.8', '+30'], ['卖四', '39.22', 0, '3.9', ''], ['卖三', '39.21', 0, '10.6', ''],
        ['卖二', '39.20', 0, '49.8', '-5'], ['卖一', '39.19', 1, '29.0', '-4']
    ].map(r => rowHtml(...r)).join('');
    document.getElementById('bookBuy').innerHTML = [
        ['买一', '39.18', 1, '47.0', '+120'], ['买二', '39.17', 0, '32.5', '+5'], ['买三', '39.16', 0, '113.6', '+92'],
        ['买四', '39.15', 0, '345.3', '-20'], ['买五', '39.14', 0, '75.5', '-13']
    ].map(r => rowHtml(...r)).join('');

    // 盘口统计
    const statRow = (h, a, b, bCls, c, d, dCls) => `<div class="stat-row ${h}"><span class="lbl">${a}</span><span class="num-r ${bCls}">${b}</span><span class="lbl lbl2">${c}</span><span class="num-r ${dCls}">${d}</span></div>`;
    const yi = '<span class="wan">亿</span>';
    document.getElementById('statA').innerHTML = [
        ['今开', '39.10', 'c-red', '均价', '39.51', 'c-red'],
        ['最高', '40.21', 'c-red', '量比', '2.32', 'c-red'],
        ['最低', '38.77', 'c-red', '市值', '576.8' + yi, 'c-gry'],
        ['现量', '260', 'c-red', '总量', '519966', 'c-gry'],
        ['外盘', '264984', 'c-red', '内盘', '254982', 'c-grn']
    ].map(r => statRow('h287', ...r)).join('');
    document.getElementById('statB').innerHTML = [
        ['换手', '3.54%', 'c-gry', '股本', '14.7' + yi, 'c-gry'],
        ['净资', '11.25', 'c-gry', '流通', '14.7' + yi, 'c-gry'],
        ['收益㈡', '0.220', 'c-gry', 'PE(动)', '88.7', 'c-gry']
    ].map(r => statRow('h285', ...r)).join('');

    // 分时成交
    const trades = [
        ['10:24','39.09','34.0','B',24],['10:24','39.09','41.8','B',19],['10:24','39.09','68.8','B',34],['10:25','39.09','43.4','B',38],
        ['10:25','39.09','26.2','B',22],['10:25','39.09','153.2','B',74],['10:25','39.12','180.3','B',84],['10:25','39.11','51.2','S',12],
        ['10:25','39.13','10.2','B',7],['10:25','39.13','20.3','B',8],['10:25','39.13','72.8','B',35],['10:25','39.13','30.1','B',14],
        ['10:25','39.14','51.3','B',12],['10:25','39.14','23.1','B',15],['10:25','39.14','36.4','S',31],['10:25','39.15','55.2','B',23],
        ['10:25','39.15','89.3','B',25],['10:25','39.15','20.7','B',10],['10:25','39.16','21.1','B',15],['10:25','39.17','88.1','B',18],
        ['10:25','39.18','33.7','B',9],['10:25','39.18','48.2','B',25]
    ];
    document.getElementById('tickList').innerHTML = trades.map(t => `<div class="tick-row"><span class="tick-time">${t[0]}</span><span class="num-r c-red">${t[1]}</span><span class="num-r c-yel">${t[2]}<span class="wan">万</span></span><span class="text-center ps-2 ${t[3] === 'S' ? 'c-grn' : 'c-red'}">${t[3]}</span><span class="tick-n">${t[4]}</span></div>`).join('');
</script>
<script src="https://cdn.jsdelivr.net/npm/bootstrap@5.3.0/dist/js/bootstrap.bundle.min.js"></script>
</body>
</html>
